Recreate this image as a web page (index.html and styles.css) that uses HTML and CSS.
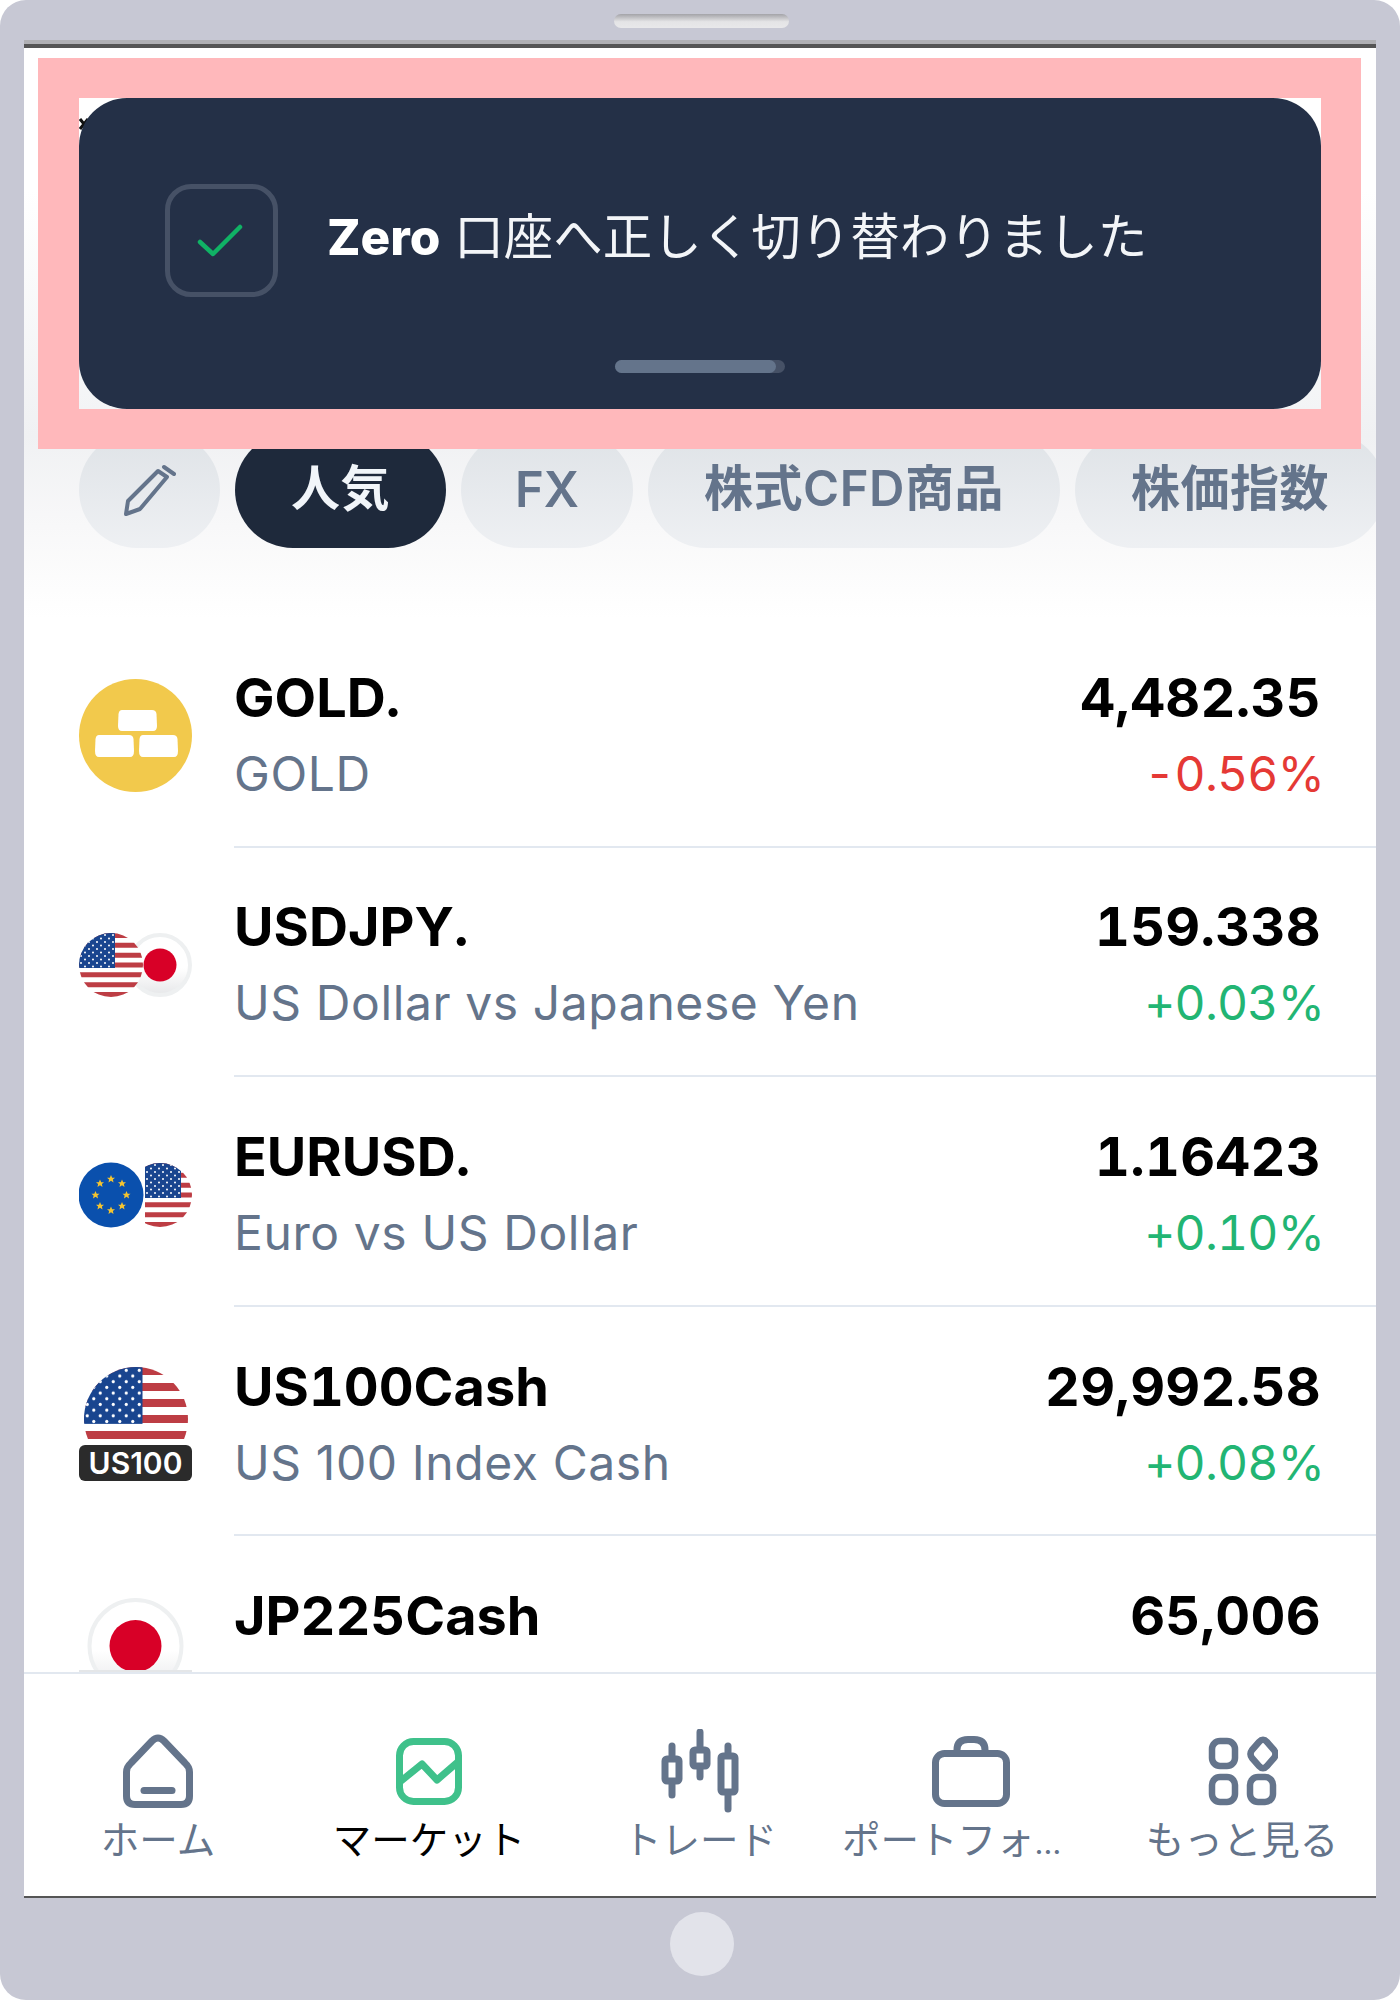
FILE: index.html
```html
<!DOCTYPE html>
<html lang="ja">
<head>
    <meta charset="UTF-8">
    <meta name="viewport" content="width=device-width, initial-scale=1.0">
    <title>マーケット</title>
    <link rel="stylesheet" href="styles.css">
</head>
<body>
    <svg class="defs" width="0" height="0">
        <defs>
            <pattern id="stars" width="8" height="7" patternUnits="userSpaceOnUse">
                <circle cx="2" cy="2" r="1" fill="#fff"/>
                <circle cx="6" cy="5.5" r="1" fill="#fff"/>
            </pattern>
            <linearGradient id="ring-fade" x1="0" y1="0" x2="0" y2="1">
                <stop offset="0.55" stop-color="#fff"/>
                <stop offset="1" stop-color="#e6e7e9"/>
            </linearGradient>
            <path id="star" d="M0-4L1.2-1.3 4-1.2 1.9.5 2.5 3.4 0 1.8-2.5 3.4-1.9.5-4-1.2-1.2-1.3Z"/>
            <symbol id="flag-us" viewBox="0 0 64 64">
                <rect width="64" height="64" fill="#fff"/>
                <path d="M0 2.5H64M0 12.3H64M0 22.2H64M0 32H64M0 41.8H64M0 51.7H64M0 61.5H64" stroke="#bd3d44" stroke-width="4.9"/>
                <rect width="36" height="35" fill="#19458f"/>
                <rect width="36" height="35" fill="url(#stars)"/>
            </symbol>
        </defs>
    </svg>

    <div class="device">
        <div class="speaker-bar"><div class="speaker"></div></div>

        <div class="screen">
            <div class="market">
                <div class="filter-bar">
                    <button class="chip chip-edit">
                        <svg width="52" height="52" viewBox="0 0 52 52" fill="none" stroke="#64748b" stroke-width="4" stroke-linejoin="round" stroke-linecap="round">
                            <path d="M2 50L4 37L34 7L43 13L16 45Z"/>
                            <path d="M40 3L50 10"/>
                        </svg>
                    </button>
                    <button class="chip active">人気</button>
                    <button class="chip chip-latin">FX</button>
                    <button class="chip">株式CFD商品</button>
                    <button class="chip">株価指数</button>
                </div>

                <div class="row">
                    <div class="row-icon">
                        <svg width="113" height="113" viewBox="0 0 113 113">
                            <circle cx="56.5" cy="56.5" r="56.5" fill="#f2c94c"/>
                            <path d="M43 31H73Q77 31 77.500 35L78 47Q78 52 74 52H43Q39 52 39 47L39.500 35Q40 31 43 31Z" fill="#fff"/>
                            <path d="M20 56H50Q54 56 54.500 60L55 72Q55 78 51 78H20Q16 78 16 72L16.500 60Q17 56 20 56Z" fill="#fff"/>
                            <path d="M64 56H94Q98 56 98.500 60L99 72Q99 78 95 78H64Q60 78 60 72L60.500 60Q61 56 64 56Z" fill="#fff"/>
                        </svg>
                    </div>
                    <div class="row-main">
                        <div>
                            <div class="symbol">GOLD.</div>
                            <div class="name">GOLD</div>
                        </div>
                        <div class="quote">
                            <div class="price">4,482.35</div>
                            <div class="change down">-0.56%</div>
                        </div>
                    </div>
                </div>

                <div class="row">
                    <div class="row-icon">
                        <svg width="113" height="113" viewBox="0 0 113 113">
                            <circle cx="81" cy="57" r="30" fill="url(#ring-fade)" stroke="#eef0f1" stroke-width="4"/>
                            <circle cx="81" cy="57" r="16.500" fill="#d80027"/>
                            <clipPath id="clip-usd"><circle cx="32" cy="57" r="32"/></clipPath>
                            <g clip-path="url(#clip-usd)"><use href="#flag-us" x="0" y="25" width="64" height="64"/></g>
                        </svg>
                    </div>
                    <div class="row-main">
                        <div>
                            <div class="symbol">USDJPY.</div>
                            <div class="name">US Dollar vs Japanese Yen</div>
                        </div>
                        <div class="quote">
                            <div class="price">159.338</div>
                            <div class="change up">+0.03%</div>
                        </div>
                    </div>
                </div>

                <div class="row">
                    <div class="row-icon">
                        <svg width="113" height="113" viewBox="0 0 113 113">
                            <clipPath id="clip-eur-us"><circle cx="81" cy="57" r="32"/></clipPath>
                            <g clip-path="url(#clip-eur-us)"><use href="#flag-us" x="66" y="25" width="64" height="64"/></g>
                            <circle cx="32" cy="57" r="32.500" fill="#0a50ad"/>
                            <g fill="#f4c430">
                                <use href="#star" x="32" y="41"/><use href="#star" x="43" y="45.500"/>
                                <use href="#star" x="47.500" y="57"/><use href="#star" x="43" y="68"/>
                                <use href="#star" x="32" y="72.500"/><use href="#star" x="21" y="68"/>
                                <use href="#star" x="16.500" y="57"/><use href="#star" x="21" y="45.500"/>
                            </g>
                        </svg>
                    </div>
                    <div class="row-main">
                        <div>
                            <div class="symbol">EURUSD.</div>
                            <div class="name">Euro vs US Dollar</div>
                        </div>
                        <div class="quote">
                            <div class="price">1.16423</div>
                            <div class="change up">+0.10%</div>
                        </div>
                    </div>
                </div>

                <div class="row">
                    <div class="row-icon index-icon">
                        <svg width="104" height="104" viewBox="0 0 104 104">
                            <clipPath id="clip-us100"><circle cx="52" cy="52" r="52"/></clipPath>
                            <g clip-path="url(#clip-us100)"><use href="#flag-us" width="104" height="104"/></g>
                        </svg>
                        <span class="index-badge">US100</span>
                    </div>
                    <div class="row-main">
                        <div>
                            <div class="symbol">US100Cash</div>
                            <div class="name">US 100 Index Cash</div>
                        </div>
                        <div class="quote">
                            <div class="price">29,992.58</div>
                            <div class="change up">+0.08%</div>
                        </div>
                    </div>
                </div>

                <div class="row">
                    <div class="row-icon">
                        <svg width="113" height="113" viewBox="0 0 113 113">
                            <circle cx="56.500" cy="49" r="46" fill="url(#ring-fade)" stroke="#eef0f1" stroke-width="4"/>
                            <circle cx="56.500" cy="49" r="26" fill="#d80027"/>
                            <rect y="73" width="113" height="3" fill="#e4e6e8"/>
                        </svg>
                    </div>
                    <div class="row-main">
                        <div>
                            <div class="symbol">JP225Cash</div>
                            <div class="name"></div>
                        </div>
                        <div class="quote">
                            <div class="price">65,006</div>
                            <div class="change"></div>
                        </div>
                    </div>
                </div>
            </div>

            <nav class="tabbar">
                <div class="tab">
                    <div class="tab-icon">
                        <svg width="70" height="74" viewBox="0 0 70 74" fill="none" stroke="#64748b" stroke-width="7" stroke-linejoin="round" stroke-linecap="round">
                            <path d="M29 7Q35 1 41 7L62 29Q66.500 33 66.500 38V62Q66.500 70.500 58 70.500H12Q3.500 70.500 3.500 62V38Q3.500 33 8 29Z"/>
                            <path d="M21 56.500H49"/>
                        </svg>
                    </div>
                    <div class="tab-label">ホーム</div>
                </div>
                <div class="tab current">
                    <div class="tab-icon">
                        <svg width="66" height="67" viewBox="0 0 66 67" fill="none" stroke="#3fc18b" stroke-width="7" stroke-linejoin="round">
                            <rect x="3.500" y="3.500" width="59" height="60" rx="14"/>
                            <path d="M5 43L26 26L41 42L63 23"/>
                        </svg>
                    </div>
                    <div class="tab-label">マーケット</div>
                </div>
                <div class="tab">
                    <div class="tab-icon">
                        <svg width="80" height="84" viewBox="0 0 80 84" fill="none" stroke="#64748b" stroke-width="7" stroke-linecap="round" stroke-linejoin="round">
                            <path d="M12 17V28M12 54V66"/>
                            <rect x="5" y="30" width="14" height="22" rx="2"/>
                            <path d="M40 3V18M40 40V48"/>
                            <rect x="33" y="21" width="14" height="16" rx="2"/>
                            <path d="M68 17V24M68 66V80"/>
                            <rect x="61" y="27" width="14" height="36" rx="2"/>
                        </svg>
                    </div>
                    <div class="tab-label">トレード</div>
                </div>
                <div class="tab">
                    <div class="tab-icon">
                        <svg width="78" height="71" viewBox="0 0 78 71" fill="none" stroke="#64748b" stroke-width="7" stroke-linejoin="round">
                            <rect x="3.500" y="17.500" width="71" height="50" rx="9"/>
                            <path d="M25 17V14Q25 3.500 36 3.500H42Q53 3.500 53 14V17"/>
                        </svg>
                    </div>
                    <div class="tab-label tab-label-long">ポートフォ<span class="ellipsis">…</span></div>
                </div>
                <div class="tab">
                    <div class="tab-icon">
                        <svg width="72" height="70" viewBox="0 0 72 70" fill="none" stroke="#64748b" stroke-width="6.500" stroke-linejoin="round">
                            <g transform="translate(3 0)">
                                <rect x="3" y="5" width="23" height="25" rx="8"/>
                                <rect x="3" y="41" width="23" height="25" rx="8"/>
                                <rect x="41" y="41" width="23" height="25" rx="8"/>
                                <path d="M50 6Q54 1.500 58 6L65 14Q68 18 65 22L58 30Q54 34.500 50 30L43 22Q40 18 43 14Z"/>
                            </g>
                        </svg>
                    </div>
                    <div class="tab-label">もっと見る</div>
                </div>
            </nav>
        </div>

        <div class="home-bar"><div class="home-button"></div></div>

        <div class="highlight">
            <div class="toast-area">
                <svg class="close-peek" width="10" height="12" viewBox="0 0 10 12"><path d="M1 1L9 11M9 1L1 11" stroke="#111" stroke-width="3"/></svg>
                <div class="toast">
                    <div class="toast-row">
                        <div class="toast-check">
                            <svg width="46" height="36" viewBox="0 0 46 36" fill="none" stroke="#10b265" stroke-width="4.500" stroke-linecap="round" stroke-linejoin="round">
                                <path d="M3 19L16 31L43 4"/>
                            </svg>
                        </div>
                        <div class="toast-text"><b>Zero</b> 口座へ正しく切り替わりました</div>
                    </div>
                    <div class="toast-progress"><div class="toast-progress-fill"></div></div>
                </div>
            </div>
        </div>
    </div>
</body>
</html>
```

FILE: styles.css
```css
* {
    box-sizing: border-box;
}
body {
    margin: 0;
    background-color: #fff;
    font-family: Inter, "Noto Sans CJK JP", sans-serif;
}
.defs {
    position: absolute;
}
.device {
    position: relative;
    display: flex;
    flex-direction: column;
    width: 1400px;
    height: 2000px;
    padding: 0 24px;
    background-color: #c7c8d4;
    border-radius: 26px;
}
.speaker-bar {
    display: flex;
    justify-content: center;
    height: 44px;
    padding-top: 14px;
    border-bottom: 4px solid #b0b0b4;
}
.speaker {
    width: 175px;
    height: 14px;
    margin-left: 3px;
    border-radius: 7px;
    background: linear-gradient(#a3a3a8, #e4e4e6 55%, #e8e8ea);
}
.screen {
    display: flex;
    flex-direction: column;
    height: 1854px;
    background-color: #fff;
    border-top: 4px solid #555;
    border-bottom: 2px solid #555;
    overflow: hidden;
}
.market {
    height: 1624px;
    overflow: hidden;
}
.filter-bar {
    display: flex;
    gap: 15px;
    height: 570px;
    padding: 384px 0 0 55px;
    background: linear-gradient(#fff 25%, #f0f1f3 68%, #f8f8f9 84%, #fdfdfd 95%, #fff);
}
.chip {
    flex: none;
    height: 116px;
    padding: 0 56px 12px;
    border: none;
    border-radius: 58px;
    background: linear-gradient(#dfe3e7, #eef0f3);
    color: #64748b;
    font-family: inherit;
    font-size: 49px;
    font-weight: 600;
    letter-spacing: 0.5px;
}
.chip-edit {
    display: flex;
    align-items: center;
    justify-content: center;
    width: 141px;
    padding: 0;
}
.chip-latin {
    padding: 0 54px 2px;
    letter-spacing: 0;
}
.chip.active {
    background: #1e293b;
    color: #f1f5f9;
}
.row {
    display: flex;
    gap: 42px;
    height: 229.6px;
    padding-left: 55px;
}
.row-icon {
    display: flex;
    flex: none;
    align-items: center;
    justify-content: center;
    width: 113px;
    padding-top: 5px;
}
.index-icon {
    position: relative;
}
.index-icon svg {
    margin-top: -10px;
}
.index-badge {
    position: absolute;
    left: 0;
    top: 138px;
    width: 113px;
    height: 36px;
    border-radius: 6px;
    background-color: #2b2b2b;
    color: #fff;
    font-size: 30px;
    font-weight: 600;
    line-height: 36px;
    text-align: center;
}
.row-main {
    display: flex;
    flex: 1;
    align-items: center;
    justify-content: space-between;
    padding: 8px 55px 0 0;
    border-bottom: 2px solid #e2e8f0;
}
.symbol, .price {
    color: #000;
    font-size: 54px;
    font-weight: 700;
    line-height: 76px;
    font-variant-numeric: tabular-nums;
}
.price {
    letter-spacing: 0.3px;
}
.name, .change {
    min-height: 76px;
    color: #64748b;
    font-size: 48px;
    line-height: 76px;
}
.name {
    letter-spacing: 0.6px;
}
.quote {
    text-align: right;
}
.change {
    margin-right: -3px;
    letter-spacing: -0.8px;
    font-variant-numeric: tabular-nums;
}
.change.up {
    color: #22b573;
}
.change.down {
    color: #e53935;
}
.tabbar {
    display: flex;
    justify-content: space-between;
    height: 224px;
    padding: 54px 8px 0;
    background-color: #fff;
    border-top: 2px solid #e2e8f0;
}
.tab {
    width: 252px;
}
.tab-icon {
    display: flex;
    align-items: center;
    justify-content: center;
    height: 86px;
}
.tab-label {
    margin-top: 2px;
    color: #64748b;
    font-size: 38.5px;
    line-height: 48px;
    text-align: center;
    white-space: nowrap;
}
.tab-label-long {
    margin-left: -3px;
    text-align: left;
}
.ellipsis {
    font-size: 31px;
}
.tab.current .tab-label {
    color: #000;
}
.home-bar {
    display: flex;
    justify-content: center;
    padding-top: 14px;
}
.home-button {
    width: 64px;
    height: 64px;
    margin-left: 4px;
    border-radius: 50%;
    background-color: #e2e3ea;
}
.highlight {
    position: absolute;
    left: 38px;
    top: 58px;
    width: 1323px;
    height: 391px;
    padding: 40px 40px 40px 41px;
    background-color: #ffb8bb;
}
.toast-area {
    position: relative;
    height: 311px;
    background: linear-gradient(#fff 40%, #f3f4f6);
}
.close-peek {
    position: absolute;
    left: 0;
    top: 20px;
}
.toast {
    position: relative;
    height: 311px;
    padding-top: 86px;
    border-radius: 48px;
    background-color: #243047;
}
.toast-row {
    display: flex;
    align-items: center;
    gap: 49px;
    padding-left: 86px;
}
.toast-check {
    display: flex;
    align-items: center;
    justify-content: center;
    width: 113px;
    height: 113px;
    padding-right: 3px;
    border: 5px solid #465166;
    border-radius: 26px;
}
.toast-text {
    margin-top: -7px;
    color: #f3f5f8;
    font-size: 49.5px;
    line-height: 60px;
}
.toast-text b {
    color: #fff;
    font-weight: 800;
}
.toast-progress {
    width: 170px;
    height: 13px;
    margin: 63px auto 0;
    border-radius: 7px;
    background-color: #465166;
}
.toast-progress-fill {
    width: 161px;
    height: 13px;
    border-radius: 7px;
    background-color: #64748b;
}
```
